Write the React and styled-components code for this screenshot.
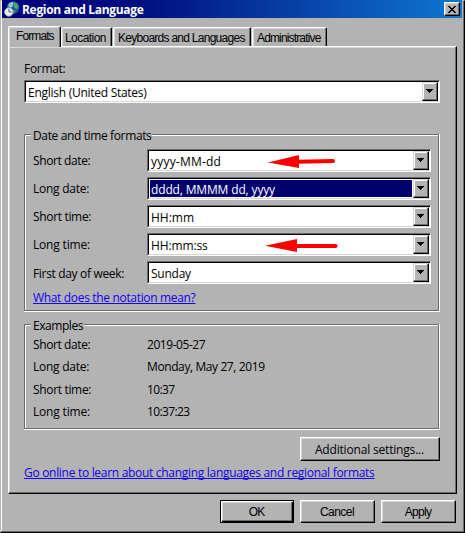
import React from 'react';
import styled, { createGlobalStyle, css } from 'styled-components';

const FACE = '#b3b3b3';
const LIGHT = '#d6d6d6';
const SHADE = '#6c6c6c';

const Global = createGlobalStyle`
  * { box-sizing: border-box; }
  body { margin: 0; background: ${FACE}; overflow: hidden; }
  button { appearance: none; border-radius: 0; padding: 0; margin: 0; }
`;

const raised = css`
  border: 1px solid;
  border-color: #fff #000 #000 #fff;
  box-shadow: inset -1px -1px 0 ${SHADE}, inset 1px 1px 0 ${LIGHT};
`;

const Window = styled.main`
  width: 465px;
  height: 533px;
  background: ${FACE};
  border: 1px solid;
  border-color: ${FACE} #000 #000 ${FACE};
  box-shadow: inset -1px -1px 0 ${SHADE}, inset 1px 0 0 #fff;
  color: #000;
  font: 12px/16px 'Open Sans', 'Noto Sans', sans-serif;
  display: flex;
  flex-direction: column;
`;

const TitleBar = styled.header`
  height: 18px;
  margin: -1px 2px 0 1px;
  padding: 0 2px 0 2px;
  display: flex;
  align-items: center;
  background: linear-gradient(90deg, #00007b 0%, #000f80 30%, #1080d8 106%);
`;

const Title = styled.h1`
  flex: 1;
  margin: 0 0 0 2px;
  padding-top: 1px;
  color: #fff;
  font-size: 12px;
  line-height: 16px;
  font-weight: 700;
  letter-spacing: -0.31px;
  white-space: nowrap;
`;

const CloseButton = styled.button`
  ${raised}
  width: 16px;
  height: 14px;
  background: ${FACE};
  display: flex;
  align-items: center;
  justify-content: center;
`;

const Text = styled.span`
  white-space: nowrap;
  letter-spacing: ${(p) => p.$track || 0}px;
`;

const TabStrip = styled.nav`
  display: flex;
  align-items: flex-end;
  height: 21px;
  margin: 8px 0 -1px 7px;
  gap: 1px;
`;

const Tab = styled.button`
  position: relative;
  width: ${(p) => p.$width}px;
  height: ${(p) => (p.$active ? 21 : 19)}px;
  margin-right: ${(p) => (p.$active ? -1 : 0)}px;
  margin-bottom: ${(p) => (p.$active ? 0 : 1)}px;
  padding: ${(p) => (p.$active ? '0 0 2px 7px' : `1px 0 0 ${p.$inset}px`)};
  background: ${FACE};
  border: 1px solid;
  border-color: #fff #000 transparent #fff;
  border-bottom: 0;
  border-radius: 2px 2px 0 0;
  box-shadow: inset -1px 0 0 ${SHADE}, inset 1px 1px 0 ${LIGHT};
  font: 12px/16px 'Liberation Sans', Arial, sans-serif;
  color: #000;
  text-align: left;
  z-index: ${(p) => (p.$active ? 1 : 0)};
`;

const Panel = styled.section`
  ${raised}
  width: 449px;
  height: 448px;
  margin-left: 7px;
  padding: 14px 0 0 15px;
`;

const FormatLabel = styled.div`
  height: 19px;
`;

const Combo = styled.div`
  position: relative;
  width: ${(p) => p.$width}px;
  height: 23px;
  border: 1px solid;
  border-color: ${SHADE} #fff #fff ${SHADE};
  display: flex;
  background: #fff;
`;

const ComboInner = styled.div`
  flex: 1;
  display: flex;
  border: 1px solid;
  border-color: #000 ${LIGHT} ${LIGHT} #000;
  border-right: 0;
`;

const ComboValue = styled.div`
  flex: 1;
  display: flex;
  align-items: flex-start;
  height: 17px;
  margin: 1px;
  padding: 2px 0 0 1px;
  background: ${(p) => (p.$selected ? '#00006e' : '#fff')};
  color: ${(p) => (p.$selected ? '#fff' : '#000')};
`;

const DropButton = styled.button`
  width: 16px;
  height: 19px;
  margin-right: 1px;
  background: ${FACE};
  border: 1px solid;
  border-color: ${LIGHT} #000 #000 ${LIGHT};
  box-shadow: inset -1px -1px 0 ${SHADE}, inset 1px 1px 0 #fff;
  display: flex;
  align-items: flex-start;
  padding: 6px 0 0 3px;
`;

const Group = styled.fieldset`
  width: 416px;
  height: ${(p) => p.$height}px;
  margin: ${(p) => p.$gap}px 0 0;
  padding: 0 0 0 7px;
  border: 0;
  background:
    linear-gradient(${SHADE}, ${SHADE}) 0 0 / 415px 1px,
    linear-gradient(${SHADE}, ${SHADE}) 0 0 / 1px calc(100% - 1px),
    linear-gradient(${SHADE}, ${SHADE}) 414px 0 / 1px calc(100% - 1px),
    linear-gradient(${SHADE}, ${SHADE}) 0 calc(100% - 1px) / 415px 1px,
    linear-gradient(#fff, #fff) 1px 1px / 413px 1px,
    linear-gradient(#fff, #fff) 1px 1px / 1px calc(100% - 3px),
    linear-gradient(#fff, #fff) 415px 0 / 1px 100%,
    linear-gradient(#fff, #fff) 0 100% / 416px 1px;
  background-repeat: no-repeat;
  background-position:
    0 0, 0 0, 414px 0, 0 calc(100% - 1px), 1px 1px, 1px 1px, 415px 0, 0 100%;
`;

const GroupTitle = styled.div`
  width: ${(p) => p.$width}px;
  height: 16px;
  margin-top: -6px;
  padding-left: 2px;
  background: ${FACE};
`;

const FieldRows = styled.div`
  display: grid;
  row-gap: 5px;
  margin: 5px 0 0 2px;
`;

const FieldRow = styled.div`
  display: grid;
  grid-template-columns: 114px 284px;
  height: 23px;
`;

const FieldLabel = styled.div`
  padding-top: ${(p) => p.$top}px;
`;

const Link = styled.a`
  display: block;
  width: max-content;
  color: #1400f0;
  text-decoration: underline;
  text-decoration-thickness: 1px;
  text-decoration-skip-ink: none;
  text-underline-offset: 1px;
  white-space: nowrap;
  letter-spacing: ${(p) => p.$track}px;
  margin: ${(p) => p.$margin};
`;

const Examples = styled.dl`
  display: grid;
  grid-template-columns: 114px auto;
  grid-auto-rows: 22.4px;
  margin: 3px 0 0 2px;
`;

const Term = styled.dt`
  margin: 0;
`;

const Detail = styled.dd`
  margin: 0;
`;

const Button = styled.button`
  width: ${(p) => p.$width}px;
  height: ${(p) => p.$height || 23}px;
  background: ${FACE};
  ${raised}
  ${(p) =>
    p.$default &&
    css`
      border-color: #000;
      box-shadow: inset 1px 1px 0 #fff, inset -1px -1px 0 #000,
        inset -2px -2px 0 ${SHADE}, inset 2px 2px 0 ${LIGHT};
    `}
  color: #000;
  font: ${(p) =>
    p.$plain
      ? "12px/16px 'Liberation Sans', Arial, sans-serif"
      : "12px/16px 'Open Sans', 'Noto Sans', sans-serif"};
  display: flex;
  align-items: center;
  justify-content: center;
  padding-top: ${(p) => (p.$plain ? 0 : 1)}px;
  padding-right: 1px;
`;

const SettingsRow = styled.div`
  display: flex;
  justify-content: flex-end;
  width: 416px;
  margin-top: 7px;
`;

const Footer = styled.footer`
  display: flex;
  justify-content: flex-end;
  gap: 6px;
  margin: 6px 8px 0 0;
`;

const Arrow = styled.svg`
  position: absolute;
  left: ${(p) => p.$left}px;
  top: 3px;
`;

function GlobeClock() {
  return (
    <svg width="16" height="16" viewBox="0 0 16 16">
      <circle cx="9" cy="6.5" r="6.3" fill="#1557a8" />
      <path d="M5 2.5Q8 0 9.5 1.5L9 5 7 7 4 5Z" fill="#8cc9d8" />
      <path d="M10 1.5l3 1 1.5 3-1.5 3-3-2Z" fill="#4fae48" />
      <path d="M9 9l3 .5-1.5 2.5-2 .5Z" fill="#3c9a4a" />
      <circle cx="4.8" cy="11" r="4.2" fill="#e9edf0" stroke="#a4abb0" />
      <path d="M5 8v3h2.5" fill="none" stroke="#4e5358" />
    </svg>
  );
}

function DropDown({ width, value, track, selected, children }) {
  return (
    <Combo $width={width}>
      <ComboInner>
        <ComboValue $selected={selected}>
          <Text $track={track}>{value}</Text>
        </ComboValue>
        <DropButton aria-label="Open list">
          <svg width="7" height="4" viewBox="0 0 7 4" shapeRendering="crispEdges">
            <path d="M0 0h7v1H0zM1 1h5v1H1zM2 2h3v1H2zM3 3h1v1H3z" />
          </svg>
        </DropButton>
      </ComboInner>
      {children}
    </Combo>
  );
}

const fields = [
  { label: 'Short date:', lt: -0.4, top: 4, value: 'yyyy-MM-dd', vt: 0.2, arrow: 'date' },
  { label: 'Long date:', lt: -0.25, top: 4, value: 'dddd, MMMM dd, yyyy', vt: -0.15, selected: true },
  { label: 'Short time:', lt: -0.33, top: 4, value: 'HH:mm', vt: 0 },
  { label: 'Long time:', lt: -0.18, top: 4, value: 'HH:mm:ss', vt: -0.12, arrow: 'time' },
  { label: 'First day of week:', lt: -0.33, top: 5, value: 'Sunday', vt: -0.25 },
];

const examples = [
  ['Short date:', -0.4, '2019-05-27', -0.45],
  ['Long date:', -0.25, 'Monday, May 27, 2019', -0.4],
  ['Short time:', -0.33, '10:37', -0.6],
  ['Long time:', -0.18, '10:37:23', -0.62],
];

const tabs = [
  ['Formats', 53, -0.9, 7],
  ['Location', 51, -0.55, 3],
  ['Keyboards and Languages', 138, -0.73, 4],
  ['Administrative', 75, -0.85, 4],
];

export default function App() {
  return (
    <>
      <Global />
      <Window>
        <TitleBar>
          <GlobeClock />
          <Title>Region and Language</Title>
          <CloseButton aria-label="Close">
            <svg width="8" height="7" viewBox="0 0 8 7" shapeRendering="crispEdges">
              <path d="M0 0h2v1H0zM6 0h2v1H6zM1 1h2v1H1zM5 1h2v1H5zM2 2h4v1H2zM3 3h2v1H3zM2 4h4v1H2zM1 5h2v1H1zM5 5h2v1H5zM0 6h2v1H0zM6 6h2v1H6z" />
            </svg>
          </CloseButton>
        </TitleBar>
        <TabStrip>
          {tabs.map(([name, width, track, inset], i) => (
            <Tab key={name} $width={width} $inset={inset} $active={i === 0}>
              <Text $track={track}>{name}</Text>
            </Tab>
          ))}
        </TabStrip>
        <Panel>
          <FormatLabel>
            <Text $track={-0.3}>Format:</Text>
          </FormatLabel>
          <DropDown width={416} value="English (United States)" track={-0.27} />
          <Group $height={178} $gap={31}>
            <GroupTitle $width={121}>
              <Text $track={-0.37}>Date and time formats</Text>
            </GroupTitle>
            <FieldRows>
              {fields.map((f) => (
                <FieldRow key={f.label}>
                  <FieldLabel $top={f.top}>
                    <Text $track={f.lt}>{f.label}</Text>
                  </FieldLabel>
                  <DropDown width={284} value={f.value} track={f.vt} selected={f.selected}>
                    {f.arrow === 'date' && (
                      <Arrow $left={120} width="70" height="16" viewBox="0 0 70 16">
                        <path d="M0 9.5 31 2v13Z" fill="#f00" />
                        <path d="M30 8.7 65 8.1" stroke="#f00" strokeWidth="4" strokeLinecap="round" />
                      </Arrow>
                    )}
                    {f.arrow === 'time' && (
                      <Arrow $left={117} width="74" height="16" viewBox="0 0 74 16">
                        <path d="M0 8.7 32 2v13Z" fill="#f00" />
                        <path d="M30 9h40.5" stroke="#f00" strokeWidth="4" strokeLinecap="round" />
                      </Arrow>
                    )}
                  </DropDown>
                </FieldRow>
              ))}
            </FieldRows>
            <Link $track={-0.33} $margin="6px 0 0 2px">What does the notation mean?</Link>
          </Group>
          <Group $height={106} $gap={12}>
            <GroupTitle $width={53}>
              <Text $track={-0.45}>Examples</Text>
            </GroupTitle>
            <Examples>
              {examples.map(([term, tt, detail, dt]) => (
                <React.Fragment key={term}>
                  <Term><Text $track={tt}>{term}</Text></Term>
                  <Detail><Text $track={dt}>{detail}</Text></Detail>
                </React.Fragment>
              ))}
            </Examples>
          </Group>
          <SettingsRow>
            <Button $width={140} $height={24}>
              <Text $track={-0.18}>Additional settings...</Text>
            </Button>
          </SettingsRow>
          <Link $track={-0.3} $margin="4px 0 0">
            Go online to learn about changing languages and regional formats
          </Link>
        </Panel>
        <Footer>
          <Button $width={74} $plain $default><Text $track={-0.9}>OK</Text></Button>
          <Button $width={75} $plain><Text $track={-0.55}>Cancel</Text></Button>
          <Button $width={75} $plain><Text $track={-0.7}>Apply</Text></Button>
        </Footer>
      </Window>
    </>
  );
}
